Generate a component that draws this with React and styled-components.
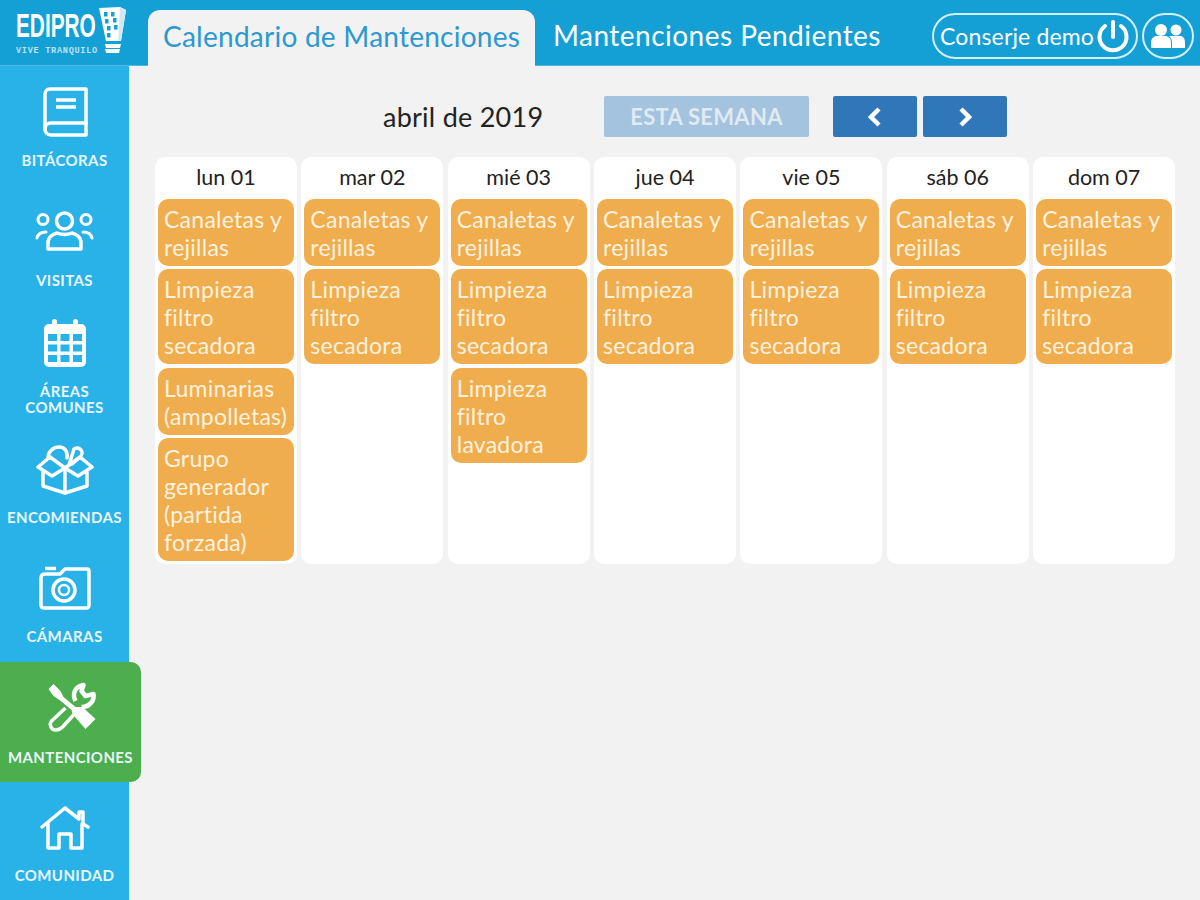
import React from "react";
import styled, { createGlobalStyle } from "styled-components";

const Global = createGlobalStyle`
  html, body { margin: 0; padding: 0; background: #f2f2f2; overflow: hidden; }
  * { box-sizing: border-box; }
  body { font-family: "Lato", "Open Sans", sans-serif; }
`;

const Page = styled.div`
  width: 1200px;
  height: 900px;
  display: grid;
  grid-template-rows: 66px 1fr;
  overflow: hidden;
`;
const Header = styled.header`
  display: flex;
  align-items: flex-end;
  background: #149fd5;
  border-bottom: 1px solid #52b8e2;
`;
const Logo = styled.div`
  width: 148px;
  height: 65px;
  flex: none;
  display: flex;
  padding: 7px 0 0 16px;
  color: #fff;
`;
const LogoText = styled.div`
  display: flex;
  flex-direction: column;
  width: 83px;
`;
const LogoName = styled.span`
  display: block;
  font: 700 33px/37px "Liberation Sans", sans-serif;
  transform: scaleX(0.63);
  transform-origin: left center;
  white-space: nowrap;
`;
const LogoTag = styled.span`
  margin-top: 2px;
  font: 700 8.5px/10px "Liberation Mono", monospace;
  letter-spacing: 0.75px;
  opacity: 0.7;
  white-space: nowrap;
`;
const Tabs = styled.nav`
  display: flex;
  align-items: flex-end;
  height: 56px;
  flex: 1;
`;
const Tab = styled.div`
  height: 56px;
  width: ${(p) => p.$w}px;
  padding-top: 9px;
  padding-left: ${(p) => (p.$active ? 15 : 18)}px;
  font-size: 28px;
  line-height: 34px;
  letter-spacing: ${(p) => (p.$active ? 0.25 : 0.48)}px;
  white-space: nowrap;
  color: ${(p) => (p.$active ? "#2b98d2" : "#fff")};
  background: ${(p) => (p.$active ? "#f2f2f2" : "transparent")};
  border-radius: 12px 12px 0 0;
  margin-bottom: ${(p) => (p.$active ? "-1px" : "0")};
`;
const Actions = styled.div`
  display: flex;
  gap: 4px;
  align-self: flex-start;
  margin: 4px 6px 0 0;
`;
const Pill = styled.div`
  height: 46px;
  width: ${(p) => p.$w}px;
  border: 2px solid #d5eef8;
  border-radius: 23px;
  color: #fff;
  display: flex;
  align-items: center;
  justify-content: center;
  gap: 2px;
  font-size: 23px;
  letter-spacing: 0.15px;
  white-space: nowrap;
`;
const Body = styled.div`
  display: flex;
  min-height: 0;
`;
const Sidebar = styled.aside`
  width: 129px;
  flex: none;
  background: #29b2e8;
  display: flex;
  flex-direction: column;
`;
const Item = styled.div`
  height: 119.3px;
  flex: none;
  display: flex;
  flex-direction: column;
  align-items: center;
  color: #e9f7fd;
  padding-top: ${(p) => p.$top}px;
  width: ${(p) => (p.$active ? "141px" : "129px")};
  background: ${(p) => (p.$active ? "#4cae4c" : "transparent")};
  border-radius: ${(p) => (p.$active ? "0 10px 10px 0" : "0")};
`;
const IconSlot = styled.div`
  height: ${(p) => p.$h}px;
  flex: none;
  display: flex;
  align-items: flex-start;
  justify-content: center;
`;
const Label = styled.div`
  font-size: 15px;
  line-height: 16.5px;
  font-weight: 700;
  text-align: center;
  white-space: nowrap;
  letter-spacing: 0.4px;
`;
const Main = styled.main`
  flex: 1;
  padding: 30px 25px 0 26px;
`;
const Toolbar = styled.div`
  height: 41px;
  display: flex;
  align-items: center;
  margin-bottom: 20px;
`;
const Month = styled.h2`
  margin: 0 0 0 228px;
  width: 221px;
  font-size: 27px;
  font-weight: 400;
  letter-spacing: 0.25px;
  color: #222;
  white-space: nowrap;
`;
const Today = styled.div`
  width: 205px;
  height: 41px;
  background: #a4c3de;
  color: #dfeaf3;
  font-size: 22px;
  font-weight: 700;
  letter-spacing: 0.3px;
  display: flex;
  align-items: center;
  justify-content: center;
  border-radius: 2px;
  margin-right: 24px;
`;
const Arrow = styled.div`
  width: 84px;
  height: 41px;
  background: #2f77b8;
  border-radius: 2px;
  display: flex;
  align-items: center;
  justify-content: center;
  margin-right: 6px;
`;
const Week = styled.div`
  display: grid;
  grid-template-columns: repeat(7, 1fr);
  gap: 4.5px;
`;
const Day = styled.section`
  height: 407px;
  background: #fff;
  border-radius: 10px;
  padding: 0 3px;
`;
const DayName = styled.div`
  height: 42px;
  font-size: 21.5px;
  line-height: 40px;
  text-align: center;
  color: #222;
`;
const Cards = styled.div`
  display: flex;
  flex-direction: column;
  gap: 3.3px;
`;
const Card = styled.div`
  background: #f0ad4e;
  color: #fdf1df;
  border-radius: 10px;
  padding: 6px 6px 5px;
  font-size: 23px;
  line-height: 28px;
  letter-spacing: 0.25px;
  white-space: nowrap;
`;

const I = { fill: "none", stroke: "#fff", strokeWidth: 3.5, strokeLinecap: "round", strokeLinejoin: "round" };

const Book = () => (
  <svg width="46" height="50" viewBox="0 0 46 50" {...I}>
    <path d="M8 2h36v46H9c-4 0-6-3-6-6V7c0-3 2-5 5-5z" />
    <path d="M3 42c0-3 2-6 6-6h35" />
    <path d="M14 13h20M14 20h20" strokeWidth="3.5" strokeLinecap="butt" />
  </svg>
);
const People = () => (
  <svg width="60" height="42" viewBox="0 0 60 42" {...I} style={{ marginTop: -2 }}>
    <circle cx="29.5" cy="12" r="8" />
    <circle cx="8" cy="10.5" r="5" strokeWidth="3" />
    <circle cx="51" cy="10.5" r="5" strokeWidth="3" />
    <path d="M13 40v-6c0-6 5-9 9-10 5 2 10 2 15 0 4 1 9 4 9 10v6z" />
    <path d="M2 29c1-4 4-6 9-6M57 29c-1-4-4-6-9-6" strokeWidth="3" />
  </svg>
);
const Calendar = () => (
  <svg width="44" height="50" viewBox="0 0 44 50">
    <rect x="1" y="6" width="42" height="43" rx="5" fill="#fff" />
    <rect x="9" y="1" width="5" height="10" rx="2.5" fill="#fff" />
    <rect x="30" y="1" width="5" height="10" rx="2.5" fill="#fff" />
    {[0, 1, 2].flatMap((r) =>
      [0, 1, 2].map((c) => (
        <rect key={`${r}${c}`} x={5 + c * 12.5} y={16 + r * 10.5} width="9" height="7" fill="#29b2e8" />
      ))
    )}
  </svg>
);
const Box = () => (
  <svg width="58" height="50" viewBox="0 0 58 50" {...I}>
    <path d="M2 22L14 12l15 11-13 8zM56 22L44 12 29 23l13 8z" />
    <path d="M7 27v14l22 7 22-7V27" />
    <path d="M29 23v25" />
    <path d="M12 13c0-7 6-11 11-11 6 0 9 5 8 11" />
    <path d="M33 20l5-16c2-2 5-1 7 1s1 5-1 7l-8 7" />
  </svg>
);
const Camera = () => (
  <svg width="52" height="44" viewBox="0 0 52 44" {...I}>
    <path d="M6 2.500h11" strokeLinecap="butt" />
    <path d="M2 12c0-2 1-4 4-4h15l5-5h22c1.500 0 2 1 2 2v34c0 2-1 3-3 3H5c-2 0-3-1-3-3z" />
    <circle cx="25" cy="24" r="11" />
    <circle cx="25" cy="24" r="5" strokeWidth="2.5" />
  </svg>
);
const Tools = () => (
  <svg width="52" height="50" viewBox="-2.500 0 52 50">
    <path d="M18 26L4 39c-3 4 0 9 4 9s5-1 7-3l11-12" fill="none" stroke="#fff" strokeWidth="3.5" strokeLinejoin="round" />
    <path d="M28 19c-3-6-2-14 8-16l-2 6 4 5 8-2c1 7-4 13-12 13" fill="none" stroke="#fff" strokeWidth="4.500" strokeLinejoin="round" />
    <path d="M1 7L6 2l7 7 3 6 12 10 7 0 13 12-10 10L25 32l-1-4-12-10-6-4z" fill="#fff" />
  </svg>
);
const Home = () => (
  <svg width="50" height="44" viewBox="0 0 50 44" {...I}>
    <path d="M2 21L25 2l14 11V6h4v12l5 3" />
    <path d="M8 18v24h11V28h12v14h11V18" />
  </svg>
);
const Power = () => (
  <svg width="34" height="34" viewBox="0 0 34 34" fill="none" stroke="#fff" strokeWidth="4" strokeLinecap="round">
    <path d="M17 3v15" />
    <path d="M9 7a13.500 13.500 0 1 0 16 0" />
  </svg>
);
const Users = () => (
  <svg width="34" height="26" viewBox="0 0 34 26" fill="#fff">
    <circle cx="10" cy="7" r="6" />
    <circle cx="25" cy="7" r="5.500" />
    <path d="M0 25v-5c0-5 3-7 6-7h8c3 0 6 2 6 7v5z" />
    <path d="M21 25v-5c0-3-1-5-3-7h11c3 0 5 2 5 7v5z" />
  </svg>
);
const ChevL = () => (
  <svg width="14" height="20" viewBox="0 0 14 20" fill="none" stroke="#fff" strokeWidth="4.5">
    <path d="M11 2L3 10l8 8" />
  </svg>
);
const ChevR = () => (
  <svg width="14" height="20" viewBox="0 0 14 20" fill="none" stroke="#fff" strokeWidth="4.5">
    <path d="M3 2l8 8-8 8" />
  </svg>
);
const LogoMark = () => (
  <svg width="28" height="48" viewBox="0 0 28 48">
    <path d="M0 1l21-1 6 3-5 31H7z" fill="#fff" />
    <path d="M21 0l6 3-5 31h-3z" fill="#cfe9f6" />
    {[[5,5],[12,5],[6,12],[14,11],[8,19],[15,18],[8,26]].map(([x,y]) => (
      <rect key={`${x}${y}`} x={x} y={y} width="3.5" height="4.5" fill="#149fd5" />
    ))}
    <path d="M6 37h16l-1 4H7zM6 42h15l-1 4H7z" fill="#fff" />
  </svg>
);

const NAV = [
  { label: "BITÁCORAS", Icon: Book, top: 21, slot: 65 },
  { label: "VISITAS", Icon: People, top: 26, slot: 61 },
  { label: "ÁREAS\nCOMUNES", Icon: Calendar, top: 13, slot: 65 },
  { label: "ENCOMIENDAS", Icon: Box, top: 21, slot: 64 },
  { label: "CÁMARAS", Icon: Camera, top: 23, slot: 62 },
  { label: "MANTENCIONES", Icon: Tools, top: 20, slot: 67, active: true },
  { label: "COMUNIDAD", Icon: Home, top: 24, slot: 61 },
];

const C = "Canaletas y\nrejillas";
const S = "Limpieza\nfiltro\nsecadora";
const DAYS = [
  { name: "lun 01", items: [C, S, "Luminarias\n(ampolletas)", "Grupo\ngenerador\n(partida\nforzada)"] },
  { name: "mar 02", items: [C, S] },
  { name: "mié 03", items: [C, S, "Limpieza\nfiltro\nlavadora"] },
  { name: "jue 04", items: [C, S] },
  { name: "vie 05", items: [C, S] },
  { name: "sáb 06", items: [C, S] },
  { name: "dom 07", items: [C, S] },
];

const Lines = ({ text }) =>
  text.split("\n").map((l) => <div key={l}>{l}</div>);

export default function App() {
  return (
    <Page>
      <Global />
      <Header>
        <Logo>
          <LogoText>
            <LogoName>EDIPRO</LogoName>
            <LogoTag>VIVE TRANQUILO</LogoTag>
          </LogoText>
          <LogoMark />
        </Logo>
        <Tabs>
          <Tab $active $w={387}>Calendario de Mantenciones</Tab>
          <Tab $w={397}>Mantenciones Pendientes</Tab>
          <Actions>
            <Pill $w={206}>Conserje demo<Power /></Pill>
            <Pill $w={52}><Users /></Pill>
          </Actions>
        </Tabs>
      </Header>
      <Body>
        <Sidebar>
          {NAV.map(({ label, Icon, top, slot, active }) => (
            <Item key={label} $top={top} $active={active}>
              <IconSlot $h={slot}><Icon /></IconSlot>
              <Label><Lines text={label} /></Label>
            </Item>
          ))}
        </Sidebar>
        <Main>
          <Toolbar>
            <Month>abril de 2019</Month>
            <Today>ESTA SEMANA</Today>
            <Arrow><ChevL /></Arrow>
            <Arrow><ChevR /></Arrow>
          </Toolbar>
          <Week>
            {DAYS.map((d) => (
              <Day key={d.name}>
                <DayName>{d.name}</DayName>
                <Cards>
                  {d.items.map((t) => (
                    <Card key={t}><Lines text={t} /></Card>
                  ))}
                </Cards>
              </Day>
            ))}
          </Week>
        </Main>
      </Body>
    </Page>
  );
}
